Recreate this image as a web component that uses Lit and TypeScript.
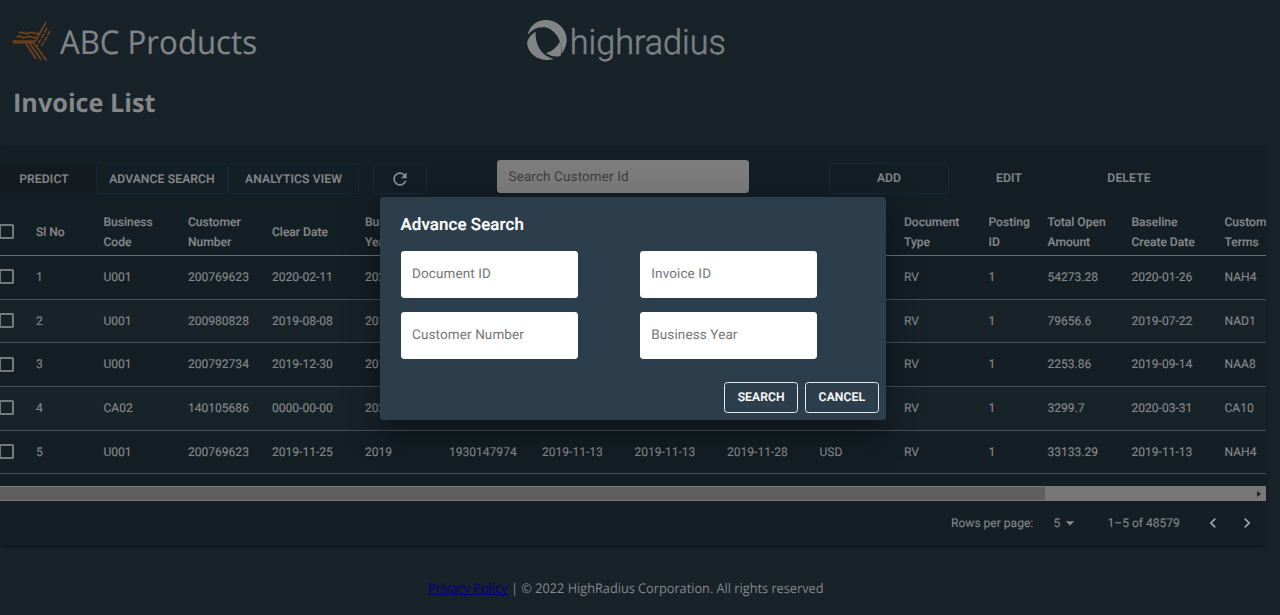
import { LitElement, html, css } from "lit";
import { customElement } from "lit/decorators.js";

const HEADERS = [["Sl No"], ["Business", "Code"], ["Customer", "Number"], ["Clear Date"], ["Business", "Year"], [], [], [], [], [], ["Document", "Type"], ["Posting", "ID"], ["Total Open", "Amount"], ["Baseline", "Create Date"], ["Customer", "Terms"]];
const ROWS = [
  ["1", "U001", "200769623", "2020-02-11", "2020", "", "", "", "", "", "RV", "1", "54273.28", "2020-01-26", "NAH4"],
  ["2", "U001", "200980828", "2019-08-08", "2019", "", "", "", "", "", "RV", "1", "79656.6", "2019-07-22", "NAD1"],
  ["3", "U001", "200792734", "2019-12-30", "2019", "", "", "", "", "", "RV", "1", "2253.86", "2019-09-14", "NAA8"],
  ["4", "CA02", "140105686", "0000-00-00", "2020", "", "", "", "", "", "RV", "1", "3299.7", "2020-03-31", "CA10"],
  ["5", "U001", "200769623", "2019-11-25", "2019", "1930147974", "2019-11-13", "2019-11-13", "2019-11-28", "USD", "RV", "1", "33133.29", "2019-11-13", "NAH4"],
];

@customElement("app-root")
export class AppRoot extends LitElement {
  static styles = css`
    :host { display: block; position: relative; width: 1280px; height: 615px; overflow: hidden; background: #182229; color: #84888a; font-family: Roboto, sans-serif; font-size: 12.1px; text-rendering: geometricPrecision; }
    * { box-sizing: border-box; }
    svg { display: block; flex: none; }
    .page { display: flex; flex-direction: column; height: 615px; }
    .top { display: flex; height: 80px; padding: 14px 0 0 10px; }
    .brand { width: 512px; }
    .title { height: 66px; padding-left: 10px; }
    .seg { font-family: "Open Sans", "Noto Sans", sans-serif; }
    .card { width: 1266px; height: 399px; background: #141e25; border-radius: 0 0 4px 0; box-shadow: 0 2px 4px rgba(0,0,0,.3); display: flex; flex-direction: column; overflow: hidden; flex: none; }
    .tools { display: flex; height: 61px; padding-top: 17px; align-items: flex-start; flex: none; }
    .btn { display: flex; align-items: center; justify-content: center; height: 31px; border: 1px solid transparent; border-radius: 3.4px; font-weight: 500; letter-spacing: .14px; white-space: nowrap; flex: none; -webkit-text-stroke: .15px currentColor; }
    .blue { border-color: #142a3b; }
    .predict { width: 96px; background: #131a20; border-radius: 0; padding-right: 8px; }
    .adv { width: 132px; }
    .ana { width: 131px; }
    .ref { width: 54px; margin-left: 14px; height: 30px; margin-top: 1px; }
    .find { width: 252px; height: 33px; margin: -3px 80px 0 70px; border-radius: 3.4px; background: #7d7d7d; color: #3f3f3f; font-size: 13.48px; letter-spacing: .13px; line-height: 34px; padding-left: 11.5px; flex: none; }
    .wide { width: 120px; height: 31px; padding-bottom: 1px; }
    .row { display: grid; grid-template-columns: 36px 67.5px 84.5px 84px 93px 84px 93px 92.5px 92.5px 92.5px 84.5px 84.5px 59px 84px 93px 60px; align-items: center; height: 43.7px; border-bottom: 1px solid #474f54; letter-spacing: -.03px; white-space: nowrap; flex: none; padding-bottom: 1px; -webkit-text-stroke: .15px currentColor; }
    .row:nth-child(odd) { background: #182229; }
    .head { height: 49px; font-weight: 500; line-height: 20px; border-bottom-color: #687073; padding: 1px 0 0; }
    .row.head { background: none; }
    .box { width: 15px; height: 15px; border: 2px solid #74797b; border-radius: 1.5px; margin-left: -1px; }
    .grid { height: 279px; flex: none; display: flex; flex-direction: column; }
    .bar { height: 15px; background: #787878; display: flex; align-items: center; justify-content: space-between; padding-right: 5px; flex: none; }
    .thumb { width: 1045px; height: 13px; background: #5f5f5f; }
    .tri { border-left: 4px solid #222; border-top: 3.5px solid transparent; border-bottom: 3.5px solid transparent; }
    .pager { display: flex; align-items: center; height: 44px; padding-left: 951px; letter-spacing: -.02px; white-space: nowrap; -webkit-text-stroke: .1px currentColor; }
    .rpp { width: 102.5px; }
    .num { width: 6.5px; }
    .down { width: 47.5px; }
    .range { width: 95.5px; }
    .prev { width: 34px; }
    .foot { display: flex; padding: 31px 0 0 428px; }
    .dialog { position: absolute; left: 380px; top: 197px; width: 506px; height: 223px; border-radius: 3.5px; background: #2c3e4b; color: #fff; box-shadow: 0 9px 13px -6px rgba(0,0,0,.2), 0 20px 32px 3px rgba(0,0,0,.14), 0 8px 39px 7px rgba(0,0,0,.12); padding: 14.5px 7px 7px 20.5px; display: flex; flex-direction: column; }
    .dt { font-size: 16.85px; font-weight: 500; letter-spacing: .126px; line-height: 26px; height: 39.5px; -webkit-text-stroke: .2px currentColor; }
    .fields { display: grid; grid-template-columns: 177px 177px; column-gap: 62.3px; row-gap: 14px; }
    .field { height: 47px; border-radius: 3.4px; background: #fff; color: #757575; font-size: 13.48px; letter-spacing: .13px; line-height: 47.5px; padding-left: 11.5px; }
    .acts { margin-top: auto; display: flex; justify-content: flex-end; gap: 6.5px; }
    .act { width: 74.2px; border-color: #e6eaec; height: 31px; padding-bottom: 1px; }
  `;

  render() {
    return html`
      <div class="page">
        <div class="top">
          <div class="brand">
            <svg width="260" height="60" viewBox="10 14 260 60">
              <g fill="none" stroke="#754317" stroke-width="1.6">
                <path d="M12.7 41H35.5L46 22.2"/>
                <path d="M12.7 42.8H33.5L46.5 60.5"/>
                <path d="M26 43.5L36 59M29.8 43.5L41 59.5"/>
                <path d="M19 33q2.5-1.2 5 0t5 0 5 0 5 0M16.5 37q2.5-1.2 5 0t5 0 5 0 5 0"/>
                <path stroke-dasharray="5 1.3" d="M47 28L37 46M50 31L41 47"/>
              </g>
              <text class="seg" x="60" y="53.5" font-size="32.7" fill="#818587" stroke="#818587" stroke-width=".2" textLength="197" lengthAdjust="spacingAndGlyphs">ABC Products</text>
            </svg>
          </div>
          <svg width="210" height="56" viewBox="522 14 210 56">
            <g transform="translate(510 0) scale(.33333)" fill="#828587">
              <path d="M53 106C58 76 83 59 110 60C151 61 179 101 168 135C163 151 158 158 154 162C159 127 138 89 105 82C84 79 64 89 53 106Z"/>
              <path d="M77 95C75 131 91 166 131 177C96 188 55 168 51 129C54 113 65 102 77 95Z"/>
              <path d="M151 123Q156 147 152 168Q130 174 108 160Q137 150 151 123Z"/>
            </g>
            <text x="569.8" y="53.5" font-family="Roboto" font-weight="300" font-size="34.5" fill="#7b8082" stroke="#7b8082" stroke-width=".6" stroke-linejoin="round" textLength="156" lengthAdjust="spacingAndGlyphs">highradius</text>
          </svg>
        </div>
        <div class="title">
          <svg width="180" height="50" viewBox="10 80 180 50"><text class="seg" x="13" y="112.3" font-size="25.5" font-weight="700" fill="#85888a" textLength="142.5" lengthAdjust="spacingAndGlyphs">Invoice List</text></svg>
        </div>
        <div class="card">
          <div class="tools">
            <div class="btn predict">PREDICT</div>
            <div class="btn blue adv">ADVANCE SEARCH</div>
            <div class="btn blue ana">ANALYTICS VIEW</div>
            <div class="btn blue ref"><svg width="20" height="20" viewBox="0 0 24 24"><path fill="#8a8e90" d="M17.65 6.35C16.2 4.9 14.21 4 12 4c-4.42 0-7.99 3.58-7.99 8s3.57 8 7.99 8c3.73 0 6.84-2.55 7.73-6h-2.08c-.82 2.33-3.04 4-5.65 4-3.31 0-6-2.69-6-6s2.69-6 6-6c1.66 0 3.14.69 4.22 1.78L13 11h7V4l-2.35 2.35z"/></svg></div>
            <div class="find">Search Customer Id</div>
            <div class="btn blue wide">ADD</div>
            <div class="btn wide">EDIT</div>
            <div class="btn wide">DELETE</div>
          </div>
          <div class="grid">
            <div class="row head"><div class="box"></div>${HEADERS.map((h) => html`<div>${h.map((l) => html`<div>${l}</div>`)}</div>`)}</div>
            ${ROWS.map((r) => html`<div class="row"><div class="box"></div>${r.map((c) => html`<div>${c}</div>`)}</div>`)}
          </div>
          <div class="bar"><div class="thumb"></div><div class="tri"></div></div>
          <div class="pager">
            <div class="rpp">Rows per page:</div><div class="num">5</div>
            <div class="down"><svg width="20" height="20" viewBox="0 0 24 24"><path fill="#8a8e90" d="M7 10l5 5 5-5z"/></svg></div>
            <div class="range">1–5 of 48579</div>
            <div class="prev"><svg width="20" height="20" viewBox="0 0 24 24"><path fill="#a0a4a6" d="M15.41 7.41L14 6l-6 6 6 6 1.41-1.41L10.83 12z"/></svg></div>
            <svg width="20" height="20" viewBox="0 0 24 24"><path fill="#a0a4a6" d="M10 6L8.59 7.41 13.17 12l-4.58 4.59L10 18l6-6z"/></svg>
          </div>
        </div>
        <div class="foot">
          <svg width="410" height="26" viewBox="428 577 410 26" font-size="13.4">
            <text class="seg" x="428" y="594" fill="#04047c" stroke="#04047c" stroke-width=".25" textLength="79.5" lengthAdjust="spacingAndGlyphs">Privacy Policy</text>
            <path d="M428 595.5H507.5" stroke="#04047c"/>
            <text class="seg" x="511" y="594" fill="#84888a" textLength="312.5" lengthAdjust="spacingAndGlyphs">| © 2022 HighRadius Corporation. All rights reserved</text>
          </svg>
        </div>
      </div>
      <div class="dialog">
        <div class="dt">Advance Search</div>
        <div class="fields">
          ${["Document ID", "Invoice ID", "Customer Number", "Business Year"].map((f) => html`<div class="field">${f}</div>`)}
        </div>
        <div class="acts"><div class="btn act">SEARCH</div><div class="btn act">CANCEL</div></div>
      </div>
    `;
  }
}
